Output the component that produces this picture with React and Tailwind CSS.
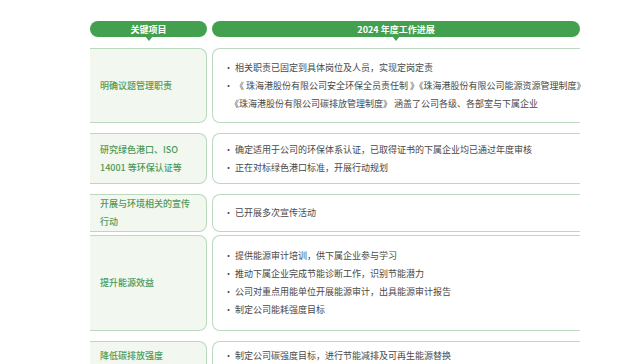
import React from "react";

const rows = [
  { h: "h-[75px]", left: ["明确议题管理职责"], right: [
    "相关职责已固定到具体岗位及人员，实现定岗定责",
    "《 珠海港股份有限公司安全环保全员责任制 》《珠海港股份有限公司能源资源管理制度》",
    "\u00a0\u00a0\u00a0《珠海港股份有限公司碳排放管理制度》 涵盖了公司各级、各部室与下属企业",
  ], noBullet: [false, false, true] },
  { h: "h-[51px]", left: ["研究绿色港口、ISO", "14001 等环保认证等"], right: [
    "确定适用于公司的环保体系认证，已取得证书的下属企业均已通过年度审核",
    "正在对标绿色港口标准，开展行动规划",
  ] },
  { h: "h-[31px]", left: ["开展与环境相关的宣传", "行动"], right: ["已开展多次宣传活动"] },
  { h: "h-[96px]", left: ["提升能源效益"], right: [
    "提供能源审计培训，供下属企业参与学习",
    "推动下属企业完成节能诊断工作，识别节能潜力",
    "公司对重点用能单位开展能源审计，出具能源审计报告",
    "制定公司能耗强度目标",
  ] },
  { h: "h-[30px]", left: ["降低碳排放强度"], right: ["制定公司碳强度目标，进行节能减排及可再生能源替换"] },
];

function Pill({ children }) {
  return (
    <div className="relative h-[16px] rounded-full bg-[#43a04f] flex items-center justify-center text-white text-[9px] font-bold leading-none">
      {children}
      <div className="absolute left-1/2 -translate-x-1/2 top-[15px] w-0 h-0 border-l-[4px] border-r-[4px] border-t-[5px] border-l-transparent border-r-transparent border-t-[#43a04f]" />
    </div>
  );
}

export default function App() {
  return (
    <div className="w-[640px] h-[364px] bg-white overflow-hidden font-['Noto_Sans_CJK_SC',sans-serif]">
      <div className="pl-[90px] pt-[21px]">
        <div className="grid grid-cols-[117px_368px] gap-x-[5px]">
          <Pill>关键项目</Pill>
          <Pill>2024 年度工作进展</Pill>
        </div>
        <div className="mt-[11px] flex flex-col gap-[10px]">
          {rows.map((r, i) => (
            <div key={i} className={`grid grid-cols-[117px_368px] gap-x-[5px] ${r.h}`}>
              <div className="border-y border-r border-[#bcd8bf] rounded-r-[8px] bg-[#f2f7f0] flex flex-col justify-center pl-[10px] text-[9px] leading-[18px] text-[#4e9a58] font-medium whitespace-nowrap">
                {r.left.map((t, j) => <div key={j}>{t}</div>)}
              </div>
              <div className="border-y border-l border-[#bcd8bf] rounded-l-[8px] flex flex-col justify-center pl-[11px] text-[9px] leading-[18px] text-[#484848] whitespace-nowrap">
                {r.right.map((t, j) => (
                  <div key={j}>{r.noBullet && r.noBullet[j] ? "" : "· "}{t}</div>
                ))}
              </div>
            </div>
          ))}
        </div>
      </div>
    </div>
  );
}
